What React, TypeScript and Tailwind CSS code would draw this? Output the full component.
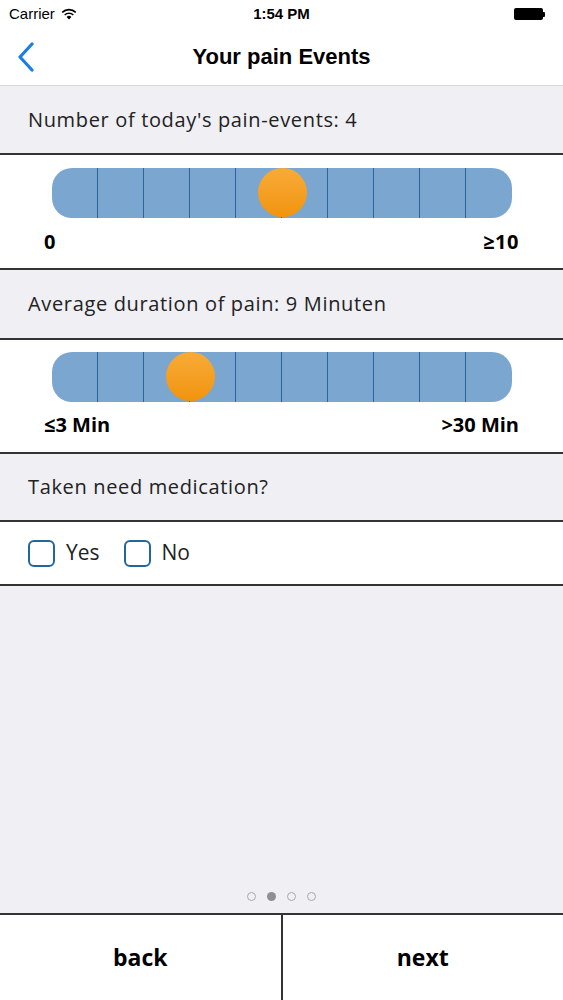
import React from "react";

const body = { fontFamily: "'Open Sans', Lato, sans-serif" } as const;
const sys = { fontFamily: "'Liberation Sans', Arial, sans-serif" } as const;

function Slider({ pos }: { pos: number }) {
  const ticks = [1, 2, 3, 4, 5, 6, 7, 8, 9];
  return (
    <div className="relative mx-[52px] h-[50px] w-[460px] rounded-[20px] bg-[#7ba6d0]">
      <div className="flex h-full">
        {ticks.map((t) => (
          <div key={t} className="h-full w-[46px] border-r-[1.5px] border-[#2a65a0]" />
        ))}
      </div>
      <div
        className="absolute top-0 h-[49px] w-[49px] rounded-full bg-gradient-to-b from-[#f8ab35] to-[#f19409]"
        style={{ left: pos * 46 - 24 }}
      />
    </div>
  );
}

function Header({ children, h }: { children: React.ReactNode; h: string }) {
  return (
    <div className={`flex ${h} items-center bg-[#efeff4] pl-[28px] text-[20px] tracking-[0.65px] text-[#222]`} style={body}>
      {children}
    </div>
  );
}

function Check({ label }: { label: string }) {
  return (
    <div className="flex items-center gap-[11px]">
      <div className="h-[27px] w-[27px] rounded-[6px] border-2 border-[#21669e]" />
      <span className="text-[21px] text-[#222]" style={body}>{label}</span>
    </div>
  );
}

export default function App() {
  return (
    <div className="flex h-[1000px] w-[563px] flex-col bg-[#efeff4]">
      {/* status bar */}
      <div className="relative flex h-[28px] items-center bg-white px-[9px] text-[15px] text-black" style={sys}>
        <span>Carrier</span>
        <svg className="ml-[6px]" width="16" height="12" viewBox="0 0 16 12">
          <path d="M8 11.5 L5.6 8.9 A3.4 3.4 0 0 1 10.4 8.9 Z" fill="#000" />
          <path d="M3.7 7 A6.2 6.2 0 0 1 12.3 7" stroke="#000" strokeWidth="1.7" fill="none" />
          <path d="M1.2 4.4 A9.8 9.8 0 0 1 14.8 4.4" stroke="#000" strokeWidth="1.7" fill="none" />
        </svg>
        <span className="absolute left-1/2 -translate-x-1/2 font-semibold">1:54 PM</span>
        <div className="ml-auto mr-[9px] flex items-center">
          <div className="h-[12px] w-[29px] rounded-[2px] bg-black" />
          <div className="h-[5px] w-[2px] rounded-r-[1px] bg-black" />
        </div>
      </div>
      {/* nav bar */}
      <div className="relative flex h-[58px] items-center justify-center border-b border-[#d8d8dc] bg-white">
        <svg className="absolute left-[16px] top-[14px]" width="20" height="30" viewBox="0 0 20 30">
          <path d="M16 2 L4 15 L16 28" stroke="#1a7ee6" strokeWidth="3.2" fill="none" strokeLinecap="round" strokeLinejoin="round" />
        </svg>
        <span className="text-[22px] font-bold text-black" style={sys}>Your pain Events</span>
      </div>

      <Header h="h-[67px]">Number of today's pain-events: 4</Header>
      <div className="border-y-2 border-[#333] bg-white pt-[13px]">
        <Slider pos={5} />
        <div className="flex h-[50px] items-center justify-between px-[44px] pb-[2px] text-[20px] font-bold tracking-[0.5px] text-black" style={body}>
          <span>0</span>
          <span>≥10</span>
        </div>
      </div>

      <Header h="h-[68px]">Average duration of pain: 9 Minuten</Header>
      <div className="border-y-2 border-[#333] bg-white pt-[12px]">
        <Slider pos={3} />
        <div className="flex h-[50px] items-center justify-between px-[44px] pb-[4px] text-[20px] font-bold text-black" style={body}>
          <span>≤3 Min</span>
          <span>&gt;30 Min</span>
        </div>
      </div>

      <Header h="h-[66px]">Taken need medication?</Header>
      <div className="flex h-[66px] items-center gap-[24px] border-y-2 border-[#333] bg-white pl-[28px]">
        <Check label="Yes" />
        <Check label="No" />
      </div>

      <div className="flex flex-1 items-end justify-center gap-[11px] pb-[12px]">
        <div className="h-[9px] w-[9px] rounded-full border border-[#aaa]" />
        <div className="h-[9px] w-[9px] rounded-full bg-[#8e8e93]" />
        <div className="h-[9px] w-[9px] rounded-full border border-[#aaa]" />
        <div className="h-[9px] w-[9px] rounded-full border border-[#aaa]" />
      </div>

      <div className="flex h-[87px] border-t-2 border-[#333] bg-white" style={body}>
        <div className="flex flex-1 items-center justify-center border-r-2 border-[#333] text-[23px] font-bold text-black">back</div>
        <div className="flex flex-1 items-center justify-center text-[23px] font-bold text-black">next</div>
      </div>
    </div>
  );
}
